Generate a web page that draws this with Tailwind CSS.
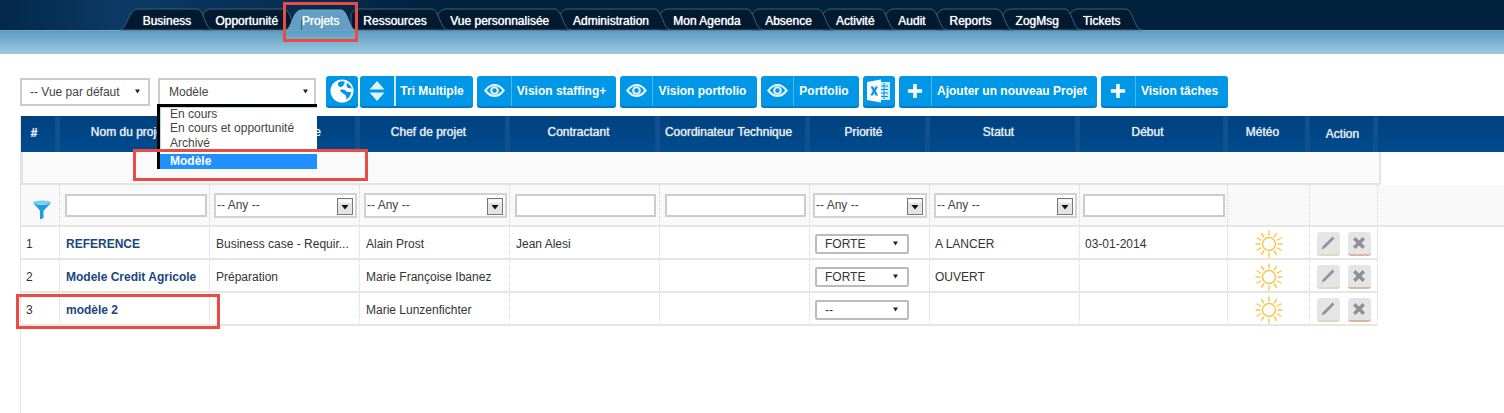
<!DOCTYPE html>
<html lang="fr">
<head>
    <meta charset="UTF-8">
    <title>Projets</title>
    <script src="https://cdn.jsdelivr.net/npm/@tailwindcss/browser@4"></script>
</head>
<body class="relative h-[413px] overflow-hidden bg-white font-['Liberation_Sans',Arial,sans-serif] text-[12px] text-[#333]">

<svg class="hidden">
    <symbol id="sun" viewBox="0 0 28 28">
        <circle cx="14" cy="14" r="6.500" fill="none" stroke="#f9c545" stroke-width="1.400"/>
        <path d="M14 1v4M14 23v4M1 14h4M23 14h4M6.500 3.500l2.200 3.400M19.300 21l2.200 3.400M21.500 3.500L19.300 7M8.700 21l-2.200 3.400M2 8l3.700 2M22.300 18l3.700 2M26 8l-3.700 2M5.700 18L2 20" fill="none" stroke="#f9c545" stroke-width="1.400" stroke-linecap="round"/>
    </symbol>
    <symbol id="eye" viewBox="0 0 24 15">
        <path d="M1.500 7.500C5 3 8.500 1.200 12 1.200S19 3 22.500 7.500C19 12 15.500 13.800 12 13.800S5 12 1.500 7.500Z" fill="none" stroke="#e6f5fd" stroke-width="2.400"/>
        <circle cx="12" cy="7.500" r="3.800" fill="none" stroke="#e6f5fd" stroke-width="2.400"/>
    </symbol>
    <symbol id="plus" viewBox="0 0 18 18">
        <path d="M7 1h4v6h6v4h-6v6H7v-6H1V7h6z" fill="#fff"/>
    </symbol>
    <symbol id="arrow" viewBox="0 0 6 5">
        <path d="M0 0h6L3 5z" fill="#222"/>
    </symbol>
    <symbol id="pencil" viewBox="0 0 16 16">
        <path d="M12.500 1.500l2 2L5 13l-3.500 1.500L3 11z" fill="#949494"/>
    </symbol>
    <symbol id="cross" viewBox="0 0 14 14">
        <path d="M3.500 1L7 4.500 10.500 1 13 3.500 9.500 7 13 10.500 10.500 13 7 9.500 3.500 13 1 10.500 4.500 7 1 3.500z" fill="#919191"/>
    </symbol>
    <symbol id="combo" viewBox="0 0 16 17">
        <rect x="0.500" y="0.500" width="15" height="16" fill="#e4e4e4" stroke="#777"/>
        <rect x="1.500" y="1.500" width="13" height="3" fill="#fff"/>
        <path d="M4.500 7h7L8 11.500z" fill="#111"/>
    </symbol>
</svg>

<!-- top nav -->
<header class="relative h-[54px] bg-gradient-to-b from-[#5a9ac1] from-[56%] to-[#9dcbe2]">
    <div class="h-[30px] bg-gradient-to-r from-[#04284b] via-[#0b3a66] via-[8%] to-[#02213d] to-[30%]"></div>
    <div class="h-px bg-[#7aa8c4]"></div>
    <svg class="absolute left-0 top-0" width="1504" height="31" fill="#021a30" stroke="#3f6079">
        <path d="M1070 30V14Q1073 9 1077 9H1126C1133 9 1134 30 1142 30Z"/>
        <path d="M1003 30V14Q1006 9 1010 9H1065C1072 9 1073 30 1081 30Z"/>
        <path d="M937 30V14Q940 9 944 9H997C1004 9 1005 30 1013 30Z"/>
        <path d="M886 30V14Q889 9 893 9H931C938 9 939 30 947 30Z"/>
        <path d="M823 30V14Q826 9 830 9H880C887 9 888 30 896 30Z"/>
        <path d="M752 30V14Q755 9 759 9H818C825 9 826 30 834 30Z"/>
        <path d="M660 30V14Q663 9 667 9H747C754 9 755 30 763 30Z"/>
        <path d="M560 30V14Q563 9 567 9H655C662 9 663 30 671 30Z"/>
        <path d="M438 30V14Q441 9 445 9H555C562 9 563 30 571 30Z"/>
        <path d="M351 30V14Q354 9 358 9H432C439 9 440 30 448 30Z"/>
        <path d="M203 30V14Q206 9 210 9H284C291 9 292 30 300 30Z"/>
        <path d="M120 30C128 28 128 9 138 9H197C204 9 205 30 213 30Z"/>
        <path d="M285 31C293 28 292 10 302 10H341C348 10 348 28 356 31Z" fill="#639fc4" stroke="#79a9c6"/>
        <path d="M301.500 20V30" stroke="#33607f"/>
    </svg>
    <nav class="absolute left-[130.500px] top-[12px] flex h-[18px] items-center text-center text-white [text-shadow:0_0_1px_#fff]">
        <a class="w-[73px]">Business</a>
        <a class="w-[86.500px]">Opportunité</a>
        <a class="w-[61.500px]">Projets</a>
        <a class="w-[87px]">Ressources</a>
        <a class="w-[122.500px]">Vue personnalisée</a>
        <a class="w-[100px]">Administration</a>
        <a class="w-[92px]">Mon Agenda</a>
        <a class="w-[71px]">Absence</a>
        <a class="w-[62.500px]">Activité</a>
        <a class="w-[51px]">Audit</a>
        <a class="w-[66px]">Reports</a>
        <a class="w-[67.500px]">ZogMsg</a>
        <a class="w-[61.500px]">Tickets</a>
    </nav>
</header>

<!-- toolbar -->
<div class="ml-5 mt-[21px] flex h-[33px] items-center font-bold text-white">
    <div class="flex h-[28px] w-[130px] items-center justify-between border-2 border-[#ccc] px-2 font-normal text-[#444]">
        <span>-- Vue par défaut</span>
        <svg class="h-[5px] w-[5px]"><use href="#arrow"/></svg>
    </div>
    <div class="ml-[8px] flex h-[28px] w-[158px] items-center justify-between border-2 border-[#ccc] pl-[9px] pr-[6px] font-normal text-[#444]">
        <span>Modèle</span>
        <svg class="h-[5px] w-[5px]"><use href="#arrow"/></svg>
    </div>

    <button class="ml-[10px] flex h-[32px] w-[32px] items-center justify-center rounded-[3px] border-b-2 border-[#0079c4] bg-[#0097e6]">
        <svg width="24" height="24" viewBox="0 0 24 24">
            <circle cx="12" cy="12" r="11.500" fill="#fff"/>
            <path d="M8 3.500C11 2 14 2 15 3L13 7C11 9 9 8 8 6zM17 4C19 5 21 7 22 9.500L18 9C16.500 8 16 6 17 4zM10 11C13 10 16 11 17 13L21 13C21 16 19 19 16.500 20.500L16 17C15 15 11 14 10 11z" fill="#0097e6"/>
        </svg>
    </button>

    <button class="ml-[2px] flex h-[32px] w-[113px] items-stretch rounded-[3px] border-b-2 border-[#0079c4] bg-[#0097e6]">
        <span class="flex w-[34px] items-center justify-center">
            <svg width="16" height="22" viewBox="0 0 16 22"><path d="M8 1l7.500 8.500H.500zM.500 12.500h15L8 21z" fill="#dff2fc"/></svg>
        </span>
        <span class="flex flex-1 items-center justify-center border-l-2 border-[#cfeafa] pr-[5px]">Tri Multiple</span>
    </button>

    <button class="ml-[4px] flex h-[32px] w-[139px] items-stretch rounded-[3px] border-b-2 border-[#0079c4] bg-[#0097e6]">
        <span class="flex w-[34px] items-center justify-center"><svg class="h-[13px] w-[21px]"><use href="#eye"/></svg></span>
        <span class="flex flex-1 items-center justify-center border-l border-[#4fb5ee] pr-[5px]">Vision staffing+</span>
    </button>
    <button class="ml-[4px] flex h-[32px] w-[137px] items-stretch rounded-[3px] border-b-2 border-[#0079c4] bg-[#0097e6]">
        <span class="flex w-[32px] items-center justify-center"><svg class="h-[13px] w-[21px]"><use href="#eye"/></svg></span>
        <span class="flex flex-1 items-center justify-center border-l border-[#4fb5ee] pr-[5px]">Vision portfolio</span>
    </button>
    <button class="ml-[4px] flex h-[32px] w-[98px] items-stretch rounded-[3px] border-b-2 border-[#0079c4] bg-[#0097e6]">
        <span class="flex w-[32px] items-center justify-center"><svg class="h-[13px] w-[21px]"><use href="#eye"/></svg></span>
        <span class="flex flex-1 items-center justify-center border-l border-[#4fb5ee] pr-[5px]">Portfolio</span>
    </button>
    <button class="ml-[4px] flex h-[32px] w-[32px] items-center justify-center rounded-[3px] border-b-2 border-[#0079c4] bg-[#0097e6]">
        <svg width="26" height="24" viewBox="0 0 26 24">
            <path d="M12 3h12v18H12z" fill="#cfe9f8"/>
            <path d="M15 7h7M15 10.500h7M15 14h7M15 17.500h7M18 4v16" stroke="#0097e6" fill="none"/>
            <path d="M1 3l14-2.500v23L1 21z" fill="#fff"/>
            <path d="M4.500 7.500h2.800L8.300 10l1.200-2.500h2.500L9.800 12l2.400 4.500H9.500L8.200 13.800 7 16.500H4.300L6.800 12z" fill="#0097e6"/>
        </svg>
    </button>
    <button class="ml-[4px] flex h-[32px] w-[198px] items-stretch rounded-[3px] border-b-2 border-[#0079c4] bg-[#0097e6]">
        <span class="flex w-[32px] items-center justify-center"><svg class="h-[16px] w-[16px]"><use href="#plus"/></svg></span>
        <span class="flex flex-1 items-center justify-center border-l border-[#4fb5ee] pr-[5px]">Ajouter un nouveau Projet</span>
    </button>
    <button class="ml-[4px] flex h-[32px] w-[127px] items-stretch rounded-[3px] border-b-2 border-[#0079c4] bg-[#0097e6]">
        <span class="flex w-[34px] items-center justify-center"><svg class="h-[16px] w-[16px]"><use href="#plus"/></svg></span>
        <span class="flex flex-1 items-center justify-center border-l border-[#4fb5ee] pr-[5px]">Vision tâches</span>
    </button>
</div>

<!-- open select list -->
<ul class="absolute left-[157px] top-[104px] z-10 h-[65px] w-[160px] border-l-[3px] border-t-[3px] border-black bg-white leading-[15px] text-[#444]">
    <li class="h-[14px] border-l border-t border-[#c3d2df] pl-[9px] leading-[13px]">En cours</li>
    <li class="border-l border-[#c3d2df] pl-[9px]">En cours et opportunité</li>
    <li class="border-l border-[#c3d2df] pl-[9px]">Archivé</li>
    <li class="mt-[3px] h-[15px] bg-[#1e90ff] pl-[10px] font-bold text-white">Modèle</li>
</ul>

<!-- table -->
<div class="ml-5 mt-[8px] h-[297px] border-l border-[#e3e3e3]">
    <table class="w-[1483px] table-fixed border-separate border-spacing-0">
        <colgroup>
            <col class="w-[39px]"><col class="w-[150px]"><col class="w-[150px]"><col class="w-[150px]">
            <col class="w-[150px]"><col class="w-[150px]"><col class="w-[120px]"><col class="w-[150px]">
            <col class="w-[148px]"><col class="w-[82px]"><col class="w-[68px]"><col>
        </colgroup>
        <thead>
            <tr class="h-[36px] bg-gradient-to-b from-[#00417f] to-[#004b8e] align-top text-[#e6eef6] [text-shadow:0_0_1px_#e6eef6] [&>th]:font-normal">
                <th class="border-r-[5px] border-[#124f8e] pr-[8px] pt-[8px] !font-bold">#</th>
                <th class="border-r-[5px] border-[#124f8e] pr-[8px] pt-[7px]">Nom du projet</th>
                <th class="border-r-[5px] border-[#124f8e] pr-[2px] pt-[7px]">Phase actuelle</th>
                <th class="border-r-[5px] border-[#124f8e] pr-[8px] pt-[7px]">Chef de projet</th>
                <th class="border-r-[5px] border-[#124f8e] pr-[8px] pt-[7px]">Contractant</th>
                <th class="border-r-[5px] border-[#124f8e] pr-[8px] pt-[7px]">Coordinateur Technique</th>
                <th class="border-r-[5px] border-[#124f8e] pr-[8px] pt-[7px]">Priorité</th>
                <th class="border-r-[5px] border-[#124f8e] pr-[8px] pt-[7px]">Statut</th>
                <th class="border-r-[5px] border-[#124f8e] pr-[8px] pt-[7px]">Début</th>
                <th class="border-r-[5px] border-[#124f8e] pr-[8px] pt-[7px]">Météo</th>
                <th class="border-r-[5px] border-[#124f8e] pl-[2px] pt-[9px]">Action</th>
                <th></th>
            </tr>
            <tr class="h-[33px]">
                <td colspan="11" class="p-0">
                    <div class="h-[33px] w-[1360px] border-x-2 border-b-2 border-[#e4e4e4] bg-[#fafafa]"></div>
                </td>
                <td></td>
            </tr>
            <tr class="h-[42px] bg-[#f9f9f9] text-[#444] [&>td]:border-b-2 [&>td]:border-b-[#e6e6e6] [&>td]:border-r [&>td]:border-r-[#d6d6d6] [&>td]:[border-right-style:dotted]">
                <td class="pl-[11px] pt-[10px]">
                    <svg class="block" width="20" height="20" viewBox="0 0 20 20">
                        <ellipse cx="10" cy="2.500" rx="9" ry="2" fill="#7cccf3"/>
                        <path d="M1 3C4 6 7 9 8 11V19.500L11.500 18V11C13 9 16 6 19 3C14 5.500 6 5.500 1 3Z" fill="#1c9fe0"/>
                    </svg>
                </td>
                <td class="px-[5px]"><input class="block h-[23px] w-[142px] border-2 border-[#ccc] bg-white"></td>
                <td class="px-[4px]">
                    <div class="flex h-[25px] w-[143px] items-center justify-between border-2 border-[#d2d2d2] bg-white pl-[1px] pr-[2px]">-- Any --<svg class="mt-[2px] h-[17px] w-[16px]"><use href="#combo"/></svg></div>
                </td>
                <td class="px-[4px]">
                    <div class="flex h-[25px] w-[143px] items-center justify-between border-2 border-[#d2d2d2] bg-white pl-[1px] pr-[2px]">-- Any --<svg class="mt-[2px] h-[17px] w-[16px]"><use href="#combo"/></svg></div>
                </td>
                <td class="px-[5px]"><input class="block h-[23px] w-[141px] border-2 border-[#ccc] bg-white"></td>
                <td class="px-[5px]"><input class="block h-[23px] w-[141px] border-2 border-[#ccc] bg-white"></td>
                <td class="px-[3px]">
                    <div class="flex h-[25px] w-[114px] items-center justify-between border-2 border-[#d2d2d2] bg-white pl-[1px] pr-[2px]">-- Any --<svg class="mt-[2px] h-[17px] w-[16px]"><use href="#combo"/></svg></div>
                </td>
                <td class="px-[4px]">
                    <div class="flex h-[25px] w-[143px] items-center justify-between border-2 border-[#d2d2d2] bg-white pl-[1px] pr-[2px]">-- Any --<svg class="mt-[2px] h-[17px] w-[16px]"><use href="#combo"/></svg></div>
                </td>
                <td class="px-[3px]"><input class="block h-[23px] w-[142px] border-2 border-[#ccc] bg-white"></td>
                <td></td>
                <td></td>
                <td class="!border-r-0"></td>
            </tr>
        </thead>
        <tbody>
            <tr class="h-[33px] [&>td]:border-b-2 [&>td]:border-b-[#e6e6e6] [&>td]:border-r [&>td]:border-r-[#d6d6d6] [&>td]:pt-[2px] [&>td]:[border-right-style:dotted]">
                <td class="pl-[5px]">1</td>
                <td class="pl-[6px] font-bold text-[#1a477c]">REFERENCE</td>
                <td class="pl-[6px]">Business case - Requir...</td>
                <td class="pl-[6px]">Alain Prost</td>
                <td class="pl-[6px]">Jean Alesi</td>
                <td></td>
                <td class="pl-[5px]">
                    <div class="flex h-[20px] w-[94px] items-center justify-between rounded-[2px] border-2 border-[#bbb] pl-[8px] pr-[9px]">FORTE<svg class="h-[5px] w-[5px]"><use href="#arrow"/></svg></div>
                </td>
                <td class="pl-[5px]">A LANCER</td>
                <td class="pl-[5px]">03-01-2014</td>
                <td class="text-center"><svg class="mx-auto h-[28px] w-[28px]"><use href="#sun"/></svg></td>
                <td>
                    <div class="flex justify-center gap-[8px]">
                        <span class="flex h-[24px] w-[23px] items-center justify-center rounded-[3px] border-b-2 border-[#c9e5bd] bg-[#e5e5e5]"><svg class="h-[16px] w-[16px]"><use href="#pencil"/></svg></span>
                        <span class="flex h-[24px] w-[23px] items-center justify-center rounded-[3px] border-b-2 border-[#d9b5a5] bg-[#e5e5e5]"><svg class="h-[14px] w-[14px]"><use href="#cross"/></svg></span>
                    </div>
                </td>
                <td class="!border-0"></td>
            </tr>
            <tr class="h-[33px] [&>td]:border-b-2 [&>td]:border-b-[#e6e6e6] [&>td]:border-r [&>td]:border-r-[#d6d6d6] [&>td]:pt-[2px] [&>td]:[border-right-style:dotted]">
                <td class="pl-[5px]">2</td>
                <td class="pl-[6px] font-bold text-[#1a477c]">Modele Credit Agricole</td>
                <td class="pl-[6px]">Préparation</td>
                <td class="pl-[6px]">Marie Françoise Ibanez</td>
                <td></td>
                <td></td>
                <td class="pl-[5px]">
                    <div class="flex h-[20px] w-[94px] items-center justify-between rounded-[2px] border-2 border-[#bbb] pl-[8px] pr-[9px]">FORTE<svg class="h-[5px] w-[5px]"><use href="#arrow"/></svg></div>
                </td>
                <td class="pl-[5px]">OUVERT</td>
                <td></td>
                <td class="text-center"><svg class="mx-auto h-[28px] w-[28px]"><use href="#sun"/></svg></td>
                <td>
                    <div class="flex justify-center gap-[8px]">
                        <span class="flex h-[24px] w-[23px] items-center justify-center rounded-[3px] border-b-2 border-[#c9e5bd] bg-[#e5e5e5]"><svg class="h-[16px] w-[16px]"><use href="#pencil"/></svg></span>
                        <span class="flex h-[24px] w-[23px] items-center justify-center rounded-[3px] border-b-2 border-[#d9b5a5] bg-[#e5e5e5]"><svg class="h-[14px] w-[14px]"><use href="#cross"/></svg></span>
                    </div>
                </td>
                <td class="!border-0"></td>
            </tr>
            <tr class="h-[33px] [&>td]:border-b-2 [&>td]:border-b-[#e6e6e6] [&>td]:border-r [&>td]:border-r-[#d6d6d6] [&>td]:pt-[2px] [&>td]:[border-right-style:dotted]">
                <td class="pl-[5px]">3</td>
                <td class="pl-[6px] font-bold text-[#1a477c]">modèle 2</td>
                <td></td>
                <td class="pl-[6px]">Marie Lunzenfichter</td>
                <td></td>
                <td></td>
                <td class="pl-[5px]">
                    <div class="flex h-[20px] w-[94px] items-center justify-between rounded-[2px] border-2 border-[#bbb] pl-[8px] pr-[9px]">--<svg class="h-[5px] w-[5px]"><use href="#arrow"/></svg></div>
                </td>
                <td></td>
                <td></td>
                <td class="text-center"><svg class="mx-auto h-[28px] w-[28px]"><use href="#sun"/></svg></td>
                <td>
                    <div class="flex justify-center gap-[8px]">
                        <span class="flex h-[24px] w-[23px] items-center justify-center rounded-[3px] border-b-2 border-[#c9e5bd] bg-[#e5e5e5]"><svg class="h-[16px] w-[16px]"><use href="#pencil"/></svg></span>
                        <span class="flex h-[24px] w-[23px] items-center justify-center rounded-[3px] border-b-2 border-[#d9b5a5] bg-[#e5e5e5]"><svg class="h-[14px] w-[14px]"><use href="#cross"/></svg></span>
                    </div>
                </td>
                <td class="!border-0"></td>
            </tr>
        </tbody>
    </table>
</div>

<!-- red annotation frames -->
<div class="absolute left-[283px] top-[2px] z-20 h-[40px] w-[75px] border-[3px] border-[#ea4c45]"></div>
<div class="absolute left-[133px] top-[149px] z-20 h-[32px] w-[235px] border-[3px] border-[#ea4c45]"></div>
<div class="absolute left-[16px] top-[294px] z-20 h-[35px] w-[204px] border-[3px] border-[#ea4c45]"></div>

</body>
</html>
